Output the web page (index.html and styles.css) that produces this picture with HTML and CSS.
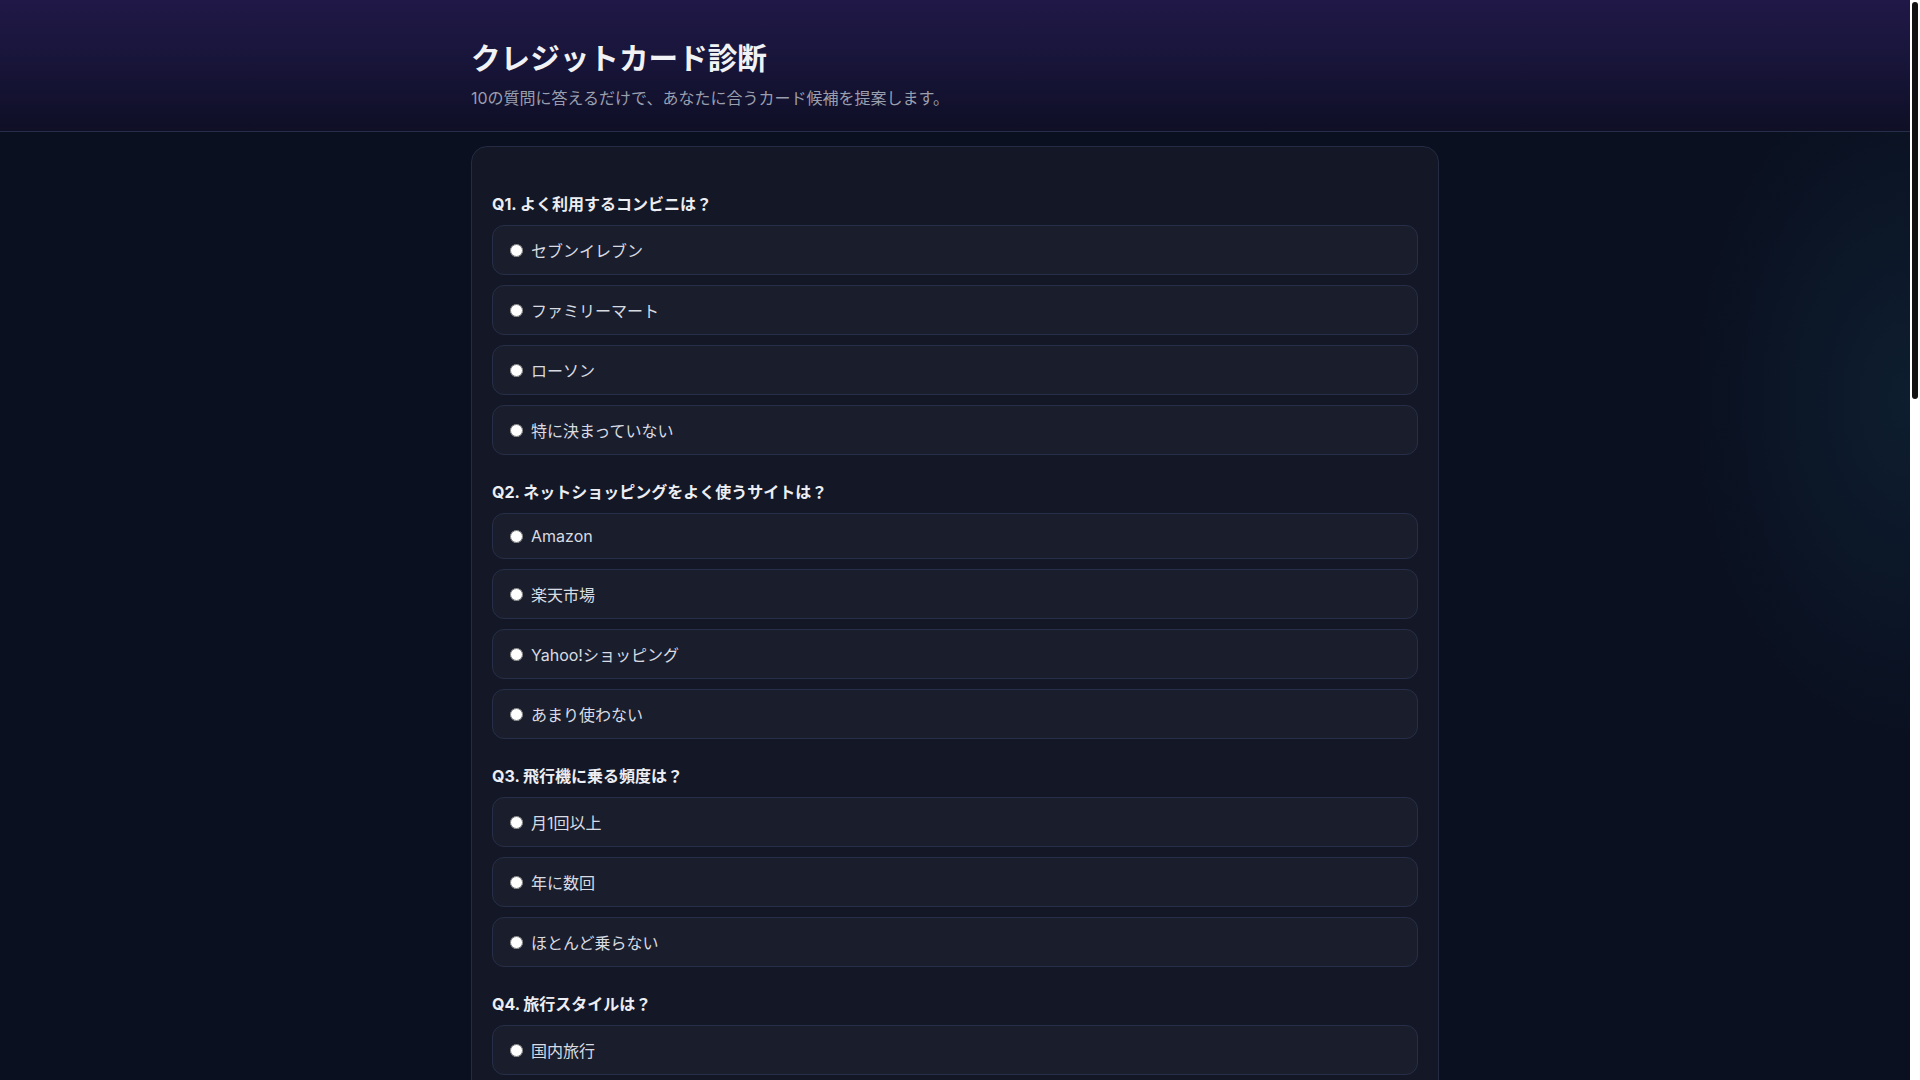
FILE: index.html
```html
<!DOCTYPE html>
<html lang="ja">
<head>
<meta charset="utf-8">
<title>クレジットカード診断</title>
<link rel="stylesheet" href="styles.css">
</head>
<body>
<div class="page">
<header class="site-header">
  <div class="header-inner">
    <h1 class="title">クレジットカード診断</h1>
    <p class="lead">10の質問に答えるだけで、あなたに合うカード候補を提案します。</p>
  </div>
</header>
<main class="main">
  <form class="quiz-card">
    <section class="question">
      <p class="q-label">Q1. よく利用するコンビニは？</p>
      <div class="options">
        <label class="option"><input type="radio" name="q1"><span>セブンイレブン</span></label>
        <label class="option"><input type="radio" name="q1"><span>ファミリーマート</span></label>
        <label class="option"><input type="radio" name="q1"><span>ローソン</span></label>
        <label class="option"><input type="radio" name="q1"><span>特に決まっていない</span></label>
      </div>
    </section>
    <section class="question">
      <p class="q-label">Q2. ネットショッピングをよく使うサイトは？</p>
      <div class="options">
        <label class="option"><input type="radio" name="q2"><span>Amazon</span></label>
        <label class="option"><input type="radio" name="q2"><span>楽天市場</span></label>
        <label class="option"><input type="radio" name="q2"><span>Yahoo!ショッピング</span></label>
        <label class="option"><input type="radio" name="q2"><span>あまり使わない</span></label>
      </div>
    </section>
    <section class="question">
      <p class="q-label">Q3. 飛行機に乗る頻度は？</p>
      <div class="options">
        <label class="option"><input type="radio" name="q3"><span>月1回以上</span></label>
        <label class="option"><input type="radio" name="q3"><span>年に数回</span></label>
        <label class="option"><input type="radio" name="q3"><span>ほとんど乗らない</span></label>
      </div>
    </section>
    <section class="question">
      <p class="q-label">Q4. 旅行スタイルは？</p>
      <div class="options">
        <label class="option"><input type="radio" name="q4"><span>国内旅行</span></label>
        <label class="option"><input type="radio" name="q4"><span>海外旅行</span></label>
        <label class="option"><input type="radio" name="q4"><span>旅行はあまりしない</span></label>
      </div>
    </section>
    <section class="question">
      <p class="q-label">Q5. 年会費についての考えは？</p>
      <div class="options">
        <label class="option"><input type="radio" name="q5"><span>無料が良い</span></label>
        <label class="option"><input type="radio" name="q5"><span>特典次第で払ってもよい</span></label>
        <label class="option"><input type="radio" name="q5"><span>高くても充実した特典が欲しい</span></label>
      </div>
    </section>
    <section class="question">
      <p class="q-label">Q6. 毎月のカード利用額は？</p>
      <div class="options">
        <label class="option"><input type="radio" name="q6"><span>5万円未満</span></label>
        <label class="option"><input type="radio" name="q6"><span>5〜10万円</span></label>
        <label class="option"><input type="radio" name="q6"><span>10〜30万円</span></label>
        <label class="option"><input type="radio" name="q6"><span>30万円以上</span></label>
      </div>
    </section>
    <section class="question">
      <p class="q-label">Q7. 最も重視するポイントは？</p>
      <div class="options">
        <label class="option"><input type="radio" name="q7"><span>ポイント還元率</span></label>
        <label class="option"><input type="radio" name="q7"><span>旅行保険の充実</span></label>
        <label class="option"><input type="radio" name="q7"><span>空港ラウンジ</span></label>
        <label class="option"><input type="radio" name="q7"><span>ステータス性</span></label>
      </div>
    </section>
    <section class="question">
      <p class="q-label">Q8. よく使うスマホ決済は？</p>
      <div class="options">
        <label class="option"><input type="radio" name="q8"><span>PayPay</span></label>
        <label class="option"><input type="radio" name="q8"><span>楽天ペイ</span></label>
        <label class="option"><input type="radio" name="q8"><span>d払い</span></label>
        <label class="option"><input type="radio" name="q8"><span>特に使わない</span></label>
      </div>
    </section>
    <section class="question">
      <p class="q-label">Q9. 利用している携帯キャリアは？</p>
      <div class="options">
        <label class="option"><input type="radio" name="q9"><span>ドコモ</span></label>
        <label class="option"><input type="radio" name="q9"><span>au</span></label>
        <label class="option"><input type="radio" name="q9"><span>ソフトバンク</span></label>
        <label class="option"><input type="radio" name="q9"><span>楽天モバイル・その他</span></label>
      </div>
    </section>
    <section class="question">
      <p class="q-label">Q10. 年齢は？</p>
      <div class="options">
        <label class="option"><input type="radio" name="q10"><span>29歳以下</span></label>
        <label class="option"><input type="radio" name="q10"><span>30〜49歳</span></label>
        <label class="option"><input type="radio" name="q10"><span>50歳以上</span></label>
      </div>
    </section>
    <div class="actions">
      <button type="button" class="submit">診断する</button>
    </div>
  </form>
</main>
</div>
<div class="scrollbar" aria-hidden="true"><div class="scrollbar-thumb"></div></div>
</body>
</html>
```
FILE: styles.css
```css
html, body {
  margin: 0;
  padding: 0;
  height: 100%;
  overflow: hidden;
}

body {
  display: flex;
  font-family: Inter, "Noto Sans CJK JP", sans-serif;
  color: #e5e7eb;
  background-color: #0a1020;
}

.page {
  flex: 1;
  min-width: 0;
  height: 100vh;
  overflow-y: auto;
  scrollbar-width: none;
  background-color: #0a1020;
  background-image: radial-gradient(ellipse 220px 340px at 100% 37%, rgba(16, 38, 56, 0.62), rgba(16, 38, 56, 0) 100%);
}

.page::-webkit-scrollbar {
  display: none;
}

.scrollbar {
  flex: none;
  width: 10px;
  height: 100vh;
  background: #ffffff;
}

.scrollbar-thumb {
  margin: 2px;
  height: 397px;
  background: #121212;
  border-radius: 3px;
}

.site-header {
  background: linear-gradient(180deg, #201847 0%, #18153a 45%, #0f0f26 100%);
  border-bottom: 1px solid #262e4a;
}

.header-inner {
  max-width: 1000px;
  margin: 0 auto;
  padding: 35px 16px 22px;
  box-sizing: border-box;
}

.title {
  margin: 0 0 7px;
  font-size: 29.6px;
  font-weight: 700;
  line-height: normal;
  color: #f1f2f6;
}

.lead {
  margin: 0;
  font-size: 16px;
  line-height: normal;
  color: #9a9fae;
}

.main {
  max-width: 1000px;
  margin: 0 auto;
  padding: 14px 16px 40px;
  box-sizing: border-box;
}

.quiz-card {
  background: #131726;
  border: 1px solid #242b42;
  border-radius: 16px;
  padding: 20px;
}

.question {
  margin-top: 24px;
}

.q-label {
  margin: 0 0 10px;
  font-size: 16px;
  font-weight: 700;
  line-height: normal;
  color: #eceef3;
}

.options {
  display: flex;
  flex-direction: column;
  gap: 10px;
}

.option {
  display: flex;
  align-items: center;
  padding: 12px;
  border: 1px solid #272e47;
  border-radius: 12px;
  background: #1a1e2c;
  color: #d8dbe2;
  font-size: 16px;
  line-height: normal;
  cursor: pointer;
}

.option input {
  width: 13px;
  height: 13px;
  margin: 0 8px 0 5px;
  flex: none;
}

.actions {
  margin-top: 24px;
  display: flex;
  justify-content: center;
}

.submit {
  font-family: Inter, "Noto Sans CJK JP", sans-serif;
  font-size: 16px;
  font-weight: 700;
  color: #ffffff;
  background: linear-gradient(90deg, #5b4bd6, #3b82c4);
  border: none;
  border-radius: 12px;
  padding: 12px 48px;
  cursor: pointer;
}
```
